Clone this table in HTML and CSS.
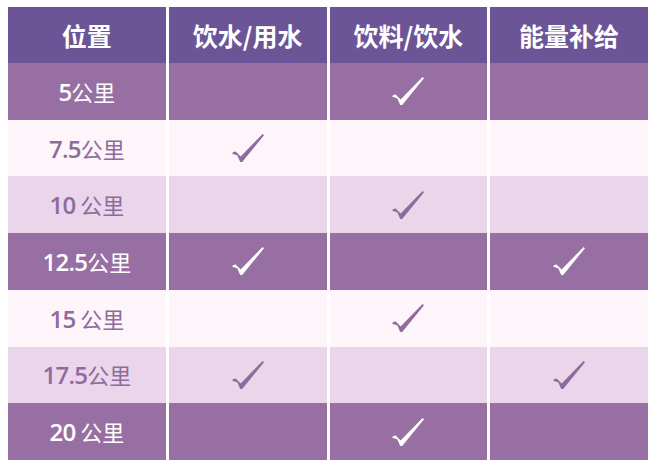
FILE: index.html
```html
<!DOCTYPE html>
<html lang="zh">
<head>
<meta charset="utf-8">
<link rel="stylesheet" href="styles.css">
</head>
<body>
<svg width="0" height="0" class="defs">
  <defs>
    <symbol id="chk" viewBox="0 0 32 28">
      <path d="M0 19.4 L1.4 18 L3.6 17.6 L8.6 22.4 L30.6 0 L32 1.2 L10.2 28 L8.2 28 L5.4 21.6 Z"/>
    </symbol>
  </defs>
</svg>
<div class="table">
  <div class="cell head">位置</div>
  <div class="cell head">饮水/用水</div>
  <div class="cell head">饮料/饮水</div>
  <div class="cell head">能量补给</div>

  <div class="cell dark"><span class="label"><span class="num">5</span><span class="unit">公里</span></span></div>
  <div class="cell dark"></div>
  <div class="cell dark"><svg class="check"><use href="#chk"/></svg></div>
  <div class="cell dark"></div>

  <div class="cell pale"><span class="label"><span class="num">7.5</span><span class="unit">公里</span></span></div>
  <div class="cell pale"><svg class="check"><use href="#chk"/></svg></div>
  <div class="cell pale"></div>
  <div class="cell pale"></div>

  <div class="cell lilac"><span class="label"><span class="num">10</span> <span class="unit">公里</span></span></div>
  <div class="cell lilac"></div>
  <div class="cell lilac"><svg class="check"><use href="#chk"/></svg></div>
  <div class="cell lilac"></div>

  <div class="cell dark"><span class="label"><span class="num">12.5</span><span class="unit">公里</span></span></div>
  <div class="cell dark"><svg class="check"><use href="#chk"/></svg></div>
  <div class="cell dark"></div>
  <div class="cell dark"><svg class="check"><use href="#chk"/></svg></div>

  <div class="cell pale"><span class="label"><span class="num">15</span> <span class="unit">公里</span></span></div>
  <div class="cell pale"></div>
  <div class="cell pale"><svg class="check"><use href="#chk"/></svg></div>
  <div class="cell pale"></div>

  <div class="cell lilac"><span class="label"><span class="num">17.5</span><span class="unit">公里</span></span></div>
  <div class="cell lilac"><svg class="check"><use href="#chk"/></svg></div>
  <div class="cell lilac"></div>
  <div class="cell lilac"><svg class="check"><use href="#chk"/></svg></div>

  <div class="cell dark"><span class="label"><span class="num">20</span> <span class="unit">公里</span></span></div>
  <div class="cell dark"></div>
  <div class="cell dark"><svg class="check"><use href="#chk"/></svg></div>
  <div class="cell dark"></div>
</div>
</body>
</html>
```
FILE: styles.css
```css
html, body {
  margin: 0;
  padding: 0;
  background: #ffffff;
}
.defs {
  position: absolute;
  width: 0;
  height: 0;
}
.table {
  margin: 7px 12px 0 8px;
  width: 640px;
  height: 453px;
  display: grid;
  grid-template-columns: repeat(4, 1fr);
  grid-template-rows: 56px repeat(7, 1fr);
  column-gap: 3px;
  font-family: "Noto Sans CJK SC", "Noto Sans", sans-serif;
}
.cell {
  display: flex;
  align-items: center;
  justify-content: center;
}
.head {
  background: #6b5597;
  color: #ffffff;
  font-size: 25px;
  font-weight: 700;
}
.dark {
  background: #986fa2;
  color: #ffffff;
}
.pale {
  background: #fdf5f9;
  color: #8f6a9c;
}
.lilac {
  background: #ead5ea;
  color: #8f6a9c;
}
.label {
  white-space: pre;
  font-size: 22px;
}
.num {
  font-family: "Open Sans", "Noto Sans", sans-serif;
  font-weight: 600;
  font-size: 24px;
  letter-spacing: -0.8px;
}
.unit {
  font-family: "Noto Sans CJK SC", sans-serif;
  font-weight: 400;
  font-size: 22px;
}
.check {
  width: 32px;
  height: 28px;
  fill: currentColor;
}
```
